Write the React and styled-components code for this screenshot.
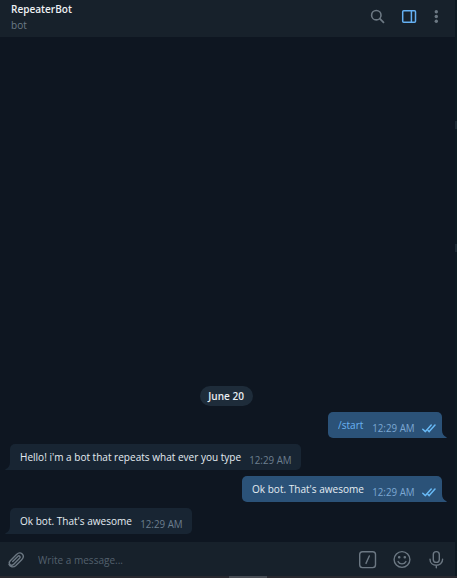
import React from "react";
import styled, { createGlobalStyle, css } from "styled-components";

const Global = createGlobalStyle`
  * { box-sizing: border-box; }
  body { margin: 0; background: #0e1621; font-family: "Open Sans", "Noto Sans", sans-serif; }
`;

/* Slightly condensed interface type */
const condensed = css`
  font-size: 10.8px;
  transform: scaleX(0.93);
  transform-origin: left center;
  white-space: nowrap;
`;

const Window = styled.div`
  display: grid;
  grid-template-columns: 455px 2px;
  grid-template-rows: 576px 2px;
  width: 457px;
  height: 578px;
  overflow: hidden;
  background: #0e1621;
`;

const Chat = styled.main`
  display: flex;
  flex-direction: column;
  min-width: 0;
`;

const Header = styled.header`
  display: flex;
  height: 37px;
  flex: none;
  background: #17212b;
`;

const Peer = styled.div`
  flex: 1;
  padding: 1px 0 0 11px;
`;

const Name = styled.div`
  ${condensed}
  font-weight: 600;
  line-height: 16px;
  color: #eef1f4;
`;

const Status = styled.div`
  ${condensed}
  line-height: 15px;
  color: #6c7b87;
`;

const Actions = styled.div`
  display: flex;
  color: #6c7883;
  svg { display: block; flex: none; }
`;

const History = styled.section`
  flex: 1;
  display: flex;
  flex-direction: column;
  justify-content: flex-end;
  padding: 0 13px 8px 10px;
`;

const DateBadge = styled.div`
  align-self: center;
  display: flex;
  justify-content: center;
  width: 53px;
  height: 20px;
  border-radius: 10px;
  background: #1e2c3a;
`;

const DateText = styled.span`
  ${condensed}
  transform-origin: center;
  color: #e9eef2;
  font-weight: 600;
  line-height: 20px;
`;

const Bubble = styled.div`
  position: relative;
  display: flex;
  align-self: ${(p) => (p.$out ? "flex-end" : "flex-start")};
  width: ${(p) => p.$width}px;
  height: 26px;
  margin-top: 6px;
  padding: 0 ${(p) => (p.$out ? 6 : 9)}px 0 10px;
  border-radius: ${(p) => (p.$out ? "5px 5px 0 5px" : "5px 5px 5px 0")};
  background: ${(p) => (p.$out ? "#2b5278" : "#182533")};
`;

const TailShape = styled.svg`
  position: absolute;
  bottom: 0;
  ${(p) => (p.$out ? "left: 100%;" : "right: 100%; transform: scaleX(-1);")}
  fill: ${(p) => (p.$out ? "#2b5278" : "#182533")};
`;

const Body = styled.span`
  flex: 1 1 0;
  min-width: 0;
`;

const BodyText = styled.span`
  ${condensed}
  display: inline-block;
  line-height: 25px;
  color: ${(p) => (p.$command ? "#6ab3f3" : "#e4ecf2")};
`;

const Meta = styled.span`
  display: flex;
  flex: none;
  color: ${(p) => (p.$out ? "#7da8d3" : "#6d7f8f")};
`;

const Time = styled.span`
  ${condensed}
  transform-origin: right center;
  font-size: 10.5px;
  line-height: 33px;
`;

const Ticks = styled.svg`
  margin: 12px 0 0 7px;
  color: #68b9f5;
`;

const Composer = styled.footer`
  display: flex;
  height: 34px;
  flex: none;
  background: #17212b;
  color: #6c7883;
  svg { display: block; flex: none; }
`;

const Input = styled.div`
  flex: 1;
  padding-left: 6px;
`;

const Placeholder = styled.div`
  ${condensed}
  line-height: 35px;
  color: #53606d;
`;

const Edge = styled.aside`
  display: flex;
  flex-direction: column;
  gap: 115px;
  padding-top: 121px;
  background: #0d1a22;
`;

const EdgeMark = styled.i`
  height: 8px;
  background: #1d2b34;
`;

const BottomEdge = styled.div`
  grid-column: 1 / -1;
  padding-left: 229px;
  background: #29292f;
`;

const Handle = styled.i`
  display: block;
  width: 38px;
  height: 2px;
  background: #484c53;
`;

function Icon({ w, h, children, sw = 1.4 }) {
  return (
    <svg width={w} height={h} viewBox={`0 0 ${w} ${h}`} fill="none" stroke="currentColor"
      strokeWidth={sw} strokeLinecap="round" strokeLinejoin="round">
      {children}
    </svg>
  );
}

function Message({ out, width, text, command }) {
  return (
    <Bubble $out={out} $width={width}>
      <Body><BodyText $command={command}>{text}</BodyText></Body>
      <Meta $out={out}>
        <Time>12:29 AM</Time>
        {out && (
          <Ticks width="14" height="9" viewBox="0 0 14 9" fill="none" stroke="currentColor" strokeWidth="1.5" strokeLinecap="round" strokeLinejoin="round">
            <path d="M.8 5.2 3.4 7.6 9.2 1.1M7.2 7.6 13 1.1M6.2 6.6l1 1" />
          </Ticks>
        )}
      </Meta>
      <TailShape $out={out} width="5" height="8" viewBox="0 0 5 8">
        <path d="M0 0C0 3.8 1.6 6 4.4 7.2 5 7.5 4.8 8 4.2 8H0Z" />
      </TailShape>
    </Bubble>
  );
}

export default function App() {
  return (
    <>
      <Global />
      <Window>
        <Chat>
          <Header>
            <Peer>
              <Name>RepeaterBot</Name>
              <Status>bot</Status>
            </Peer>
            <Actions>
              <Icon w={31} h={37} sw={1.6}>
                <circle cx="11.3" cy="15.2" r="4.7" />
                <path d="m14.8 18.7 3.7 3.6" strokeWidth="1.8" />
              </Icon>
              <svg width="31" height="37" viewBox="0 0 31 37" fill="none" stroke="#65b0f2" strokeWidth="1.5">
                <rect x="6.7" y="10.7" width="12.8" height="11.6" rx="1" />
                <path d="M15.4 11v11" />
              </svg>
              <svg width="28" height="37" viewBox="0 0 28 37" fill="currentColor">
                <circle cx="9.3" cy="11.8" r="1.7" />
                <circle cx="9.3" cy="16.5" r="1.7" />
                <circle cx="9.3" cy="21.3" r="1.7" />
              </svg>
            </Actions>
          </Header>
          <History>
            <DateBadge><DateText>June 20</DateText></DateBadge>
            <Message out command width={114} text="/start" />
            <Message width={291} text="Hello! i'm a bot that repeats what ever you type" />
            <Message out width={200} text="Ok bot. That's awesome" />
            <Message width={182} text="Ok bot. That's awesome" />
          </History>
          <Composer>
            <Icon w={32} h={34} sw={1.4}>
              <path d="m13.1 20.1 5-5c1.5-1.5 3.4.4 1.9 1.9l-5.9 5.9c-2.7 2.6-6.1-.8-3.4-3.5l6.2-6.2c4.2-4 9.3 1.1 5.2 5.2l-5.8 5.8c-2.6 2.4-5.8 1.4-6.9-1" transform="translate(-.4 -.7)" />
            </Icon>
            <Input><Placeholder>Write a message...</Placeholder></Input>
            <Icon w={34} h={34}>
              <rect x="5.7" y="9.8" width="15.8" height="15.8" rx="2.8" />
              <path d="m15.3 14-3.3 7.4" />
            </Icon>
            <Icon w={34} h={34}>
              <circle cx="14" cy="17.5" r="7.9" />
              <path d="M10.1 19.6c1.6 3 6.2 3 7.8 0" />
              <circle cx="11.2" cy="15.3" r=".6" fill="currentColor" />
              <circle cx="16.8" cy="15.3" r=".6" fill="currentColor" />
            </Icon>
            <Icon w={33} h={34}>
              <rect x="11.3" y="9.6" width="6" height="10.8" rx="3" />
              <path d="M8 17.2c0 8 12.6 8 12.6 0M14.3 23.3v2.5" />
            </Icon>
          </Composer>
        </Chat>
        <Edge>
          <EdgeMark />
          <EdgeMark />
        </Edge>
        <BottomEdge>
          <Handle />
        </BottomEdge>
      </Window>
    </>
  );
}
